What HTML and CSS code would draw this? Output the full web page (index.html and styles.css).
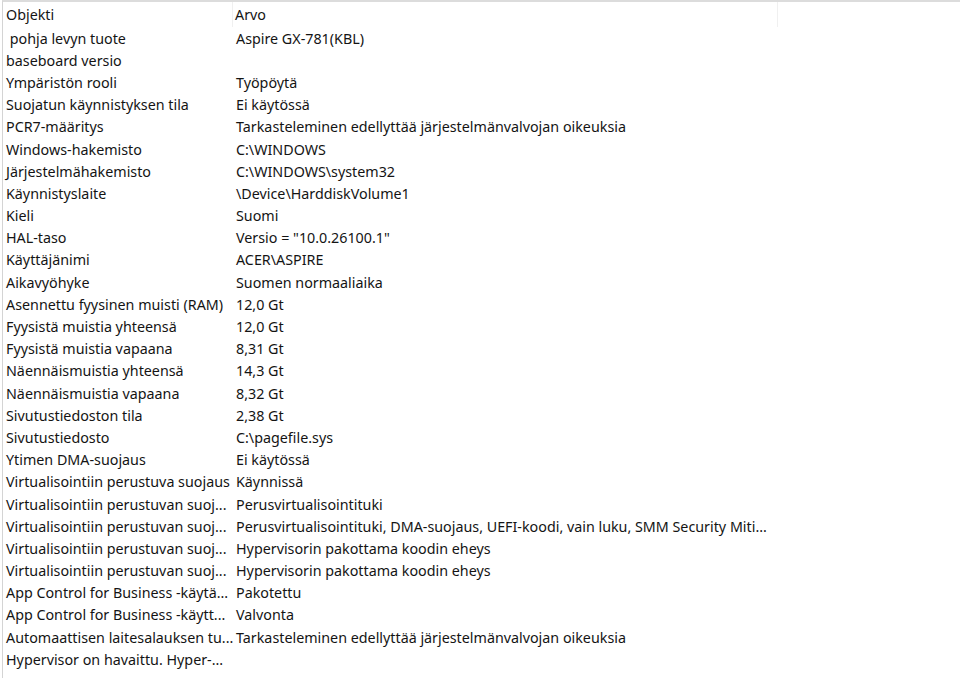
FILE: index.html
```html
<!DOCTYPE html>
<html lang="fi">
<head>
<meta charset="utf-8">
<title>Järjestelmän yhteenveto</title>
<link rel="stylesheet" href="styles.css">
</head>
<body>
<div class="list">
  <div class="head">
    <div class="hcell c1">Objekti</div>
    <div class="hcell c2">Arvo</div>
    <div class="hcell c3"></div>
  </div>
  <div class="rows">
    <div class="row"><div class="cell c1">&nbsp;pohja levyn tuote</div><div class="cell c2">Aspire GX-781(KBL)</div></div>
    <div class="row"><div class="cell c1">baseboard versio</div><div class="cell c2"></div></div>
    <div class="row"><div class="cell c1">Ympäristön rooli</div><div class="cell c2">Työpöytä</div></div>
    <div class="row"><div class="cell c1">Suojatun käynnistyksen tila</div><div class="cell c2">Ei käytössä</div></div>
    <div class="row"><div class="cell c1">PCR7-määritys</div><div class="cell c2">Tarkasteleminen edellyttää järjestelmänvalvojan oikeuksia</div></div>
    <div class="row"><div class="cell c1">Windows-hakemisto</div><div class="cell c2">C:\WINDOWS</div></div>
    <div class="row"><div class="cell c1">Järjestelmähakemisto</div><div class="cell c2">C:\WINDOWS\system32</div></div>
    <div class="row"><div class="cell c1">Käynnistyslaite</div><div class="cell c2">\Device\HarddiskVolume1</div></div>
    <div class="row"><div class="cell c1">Kieli</div><div class="cell c2">Suomi</div></div>
    <div class="row"><div class="cell c1">HAL-taso</div><div class="cell c2">Versio = "10.0.26100.1"</div></div>
    <div class="row"><div class="cell c1">Käyttäjänimi</div><div class="cell c2">ACER\ASPIRE</div></div>
    <div class="row"><div class="cell c1">Aikavyöhyke</div><div class="cell c2">Suomen normaaliaika</div></div>
    <div class="row"><div class="cell c1">Asennettu fyysinen muisti (RAM)</div><div class="cell c2">12,0 Gt</div></div>
    <div class="row"><div class="cell c1">Fyysistä muistia yhteensä</div><div class="cell c2">12,0 Gt</div></div>
    <div class="row"><div class="cell c1">Fyysistä muistia vapaana</div><div class="cell c2">8,31 Gt</div></div>
    <div class="row"><div class="cell c1">Näennäismuistia yhteensä</div><div class="cell c2">14,3 Gt</div></div>
    <div class="row"><div class="cell c1">Näennäismuistia vapaana</div><div class="cell c2">8,32 Gt</div></div>
    <div class="row"><div class="cell c1">Sivutustiedoston tila</div><div class="cell c2">2,38 Gt</div></div>
    <div class="row"><div class="cell c1">Sivutustiedosto</div><div class="cell c2">C:\pagefile.sys</div></div>
    <div class="row"><div class="cell c1">Ytimen DMA-suojaus</div><div class="cell c2">Ei käytössä</div></div>
    <div class="row"><div class="cell c1">Virtualisointiin perustuva suojaus</div><div class="cell c2">Käynnissä</div></div>
    <div class="row"><div class="cell c1">Virtualisointiin perustuvan suoj...</div><div class="cell c2">Perusvirtualisointituki</div></div>
    <div class="row"><div class="cell c1">Virtualisointiin perustuvan suoj...</div><div class="cell c2">Perusvirtualisointituki, DMA-suojaus, UEFI-koodi, vain luku, SMM Security Miti...</div></div>
    <div class="row"><div class="cell c1">Virtualisointiin perustuvan suoj...</div><div class="cell c2">Hypervisorin pakottama koodin eheys</div></div>
    <div class="row"><div class="cell c1">Virtualisointiin perustuvan suoj...</div><div class="cell c2">Hypervisorin pakottama koodin eheys</div></div>
    <div class="row"><div class="cell c1">App Control for Business -käytä...</div><div class="cell c2">Pakotettu</div></div>
    <div class="row"><div class="cell c1">App Control for Business -käytt...</div><div class="cell c2">Valvonta</div></div>
    <div class="row"><div class="cell c1">Automaattisen laitesalauksen tu...</div><div class="cell c2">Tarkasteleminen edellyttää järjestelmänvalvojan oikeuksia</div></div>
    <div class="row"><div class="cell c1">Hypervisor on havaittu. Hyper-...</div><div class="cell c2"></div></div>
  </div>
</div>
</body>
</html>
```

FILE: styles.css
```css
html, body {
  margin: 0;
  padding: 0;
  background: #ffffff;
}
body {
  font-family: "Noto Sans", "Open Sans", sans-serif;
  font-size: 14.3px;
  color: #141414;
  width: 960px;
  height: 680px;
  overflow: hidden;
}
.list {
  margin-left: 2px;
  border-top: 2px solid #dcdcdc;
  border-left: 1px solid #d4d4d4;
  height: 678px;
  box-sizing: border-box;
}
.head {
  display: grid;
  grid-template-columns: 230px 545px 1fr;
  height: 25px;
}
.hcell {
  display: flex;
  align-items: center;
  padding-left: 3px;
  white-space: nowrap;
  overflow: hidden;
}
.hcell.c1, .hcell.c2 {
  border-right: 1px solid #f0f0f0;
}
.hcell.c2 {
  padding-left: 2px;
}
.rows {
  display: flex;
  flex-direction: column;
}
.row {
  display: grid;
  grid-template-columns: 230px 545px;
  height: 22.2px;
}
.cell {
  display: flex;
  align-items: center;
  padding-left: 3px;
  white-space: nowrap;
  overflow: hidden;
}
```
